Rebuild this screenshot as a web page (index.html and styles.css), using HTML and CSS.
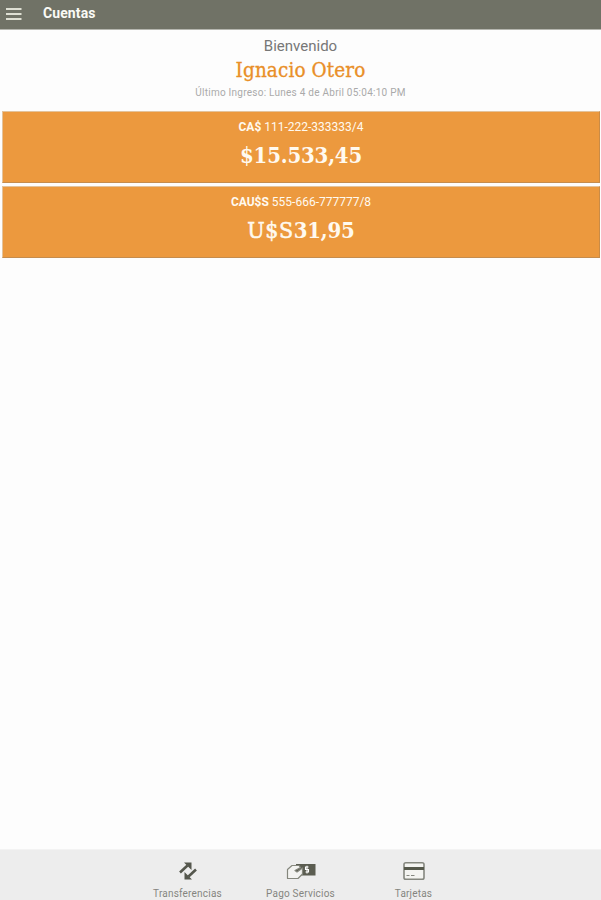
FILE: index.html
```html
<!DOCTYPE html>
<html lang="es">
<head>
<meta charset="utf-8">
<title>Cuentas</title>
<link rel="stylesheet" href="styles.css">
</head>
<body>
<header class="bar">
  <svg class="menu" width="16" height="14" viewBox="0 0 16 14"><path d="M0 2h15.500M0 7h15.500M0 12h15.500" stroke="#dedfd3" stroke-width="2.200"/></svg>
  <h1 class="title">Cuentas</h1>
</header>
<main class="content">
  <section class="welcome">
    <p class="hello">Bienvenido</p>
    <p class="name">Ignacio Otero</p>
    <p class="last">Último Ingreso: Lunes 4 de Abril 05:04:10 PM</p>
  </section>
  <section class="accounts">
    <article class="account">
      <p class="number"><b>CA$</b> 111-222-333333/4</p>
      <p class="amount">$15.533,45</p>
    </article>
    <article class="account">
      <p class="number"><b>CAU$S</b> 555-666-777777/8</p>
      <p class="amount"><span class="currency">U$S</span>31,95</p>
    </article>
  </section>
</main>
<nav class="tabs">
  <a class="tab">
    <svg class="icon" width="30" height="22" viewBox="0 0 30 22"><g fill="none" stroke="#55574d" stroke-width="2.600"><path d="M7 12.500 14.500 5.500M23 9.500l-7.500 7"/></g><path d="M11 2.500h7.500V10zM11.500 12v7.500H19z" fill="#55574d"/></svg>
    <span class="label">Transferencias</span>
  </a>
  <a class="tab">
    <svg class="icon" width="30" height="22" viewBox="0 0 30 22"><path d="M10 4h19.500v11.500H13l-3-3z" fill="#5b5d51"/><path d="M1.500 9.500 6 5.500h7l1.500 2L9 10.500l2 1.500 5.500-4v6L12 18.500H1.500z" fill="#f3f3f1" stroke="#85877d" stroke-width="1.200" stroke-linejoin="round"/><path d="M22.500 7h-3v2.500h3V12h-3M21 5.700v7.800" fill="none" stroke="#fff" stroke-width="1.100"/></svg>
    <span class="label">Pago Servicios</span>
  </a>
  <a class="tab">
    <svg class="icon" width="30" height="22" viewBox="0 0 30 22"><rect x="5" y="2.700" width="20" height="16.500" rx="1.800" fill="#f4f4f1" stroke="#85877f" stroke-width="1.600"/><path d="M5 8.500h20" stroke="#55584b" stroke-width="3"/><path d="M7.500 15.500h3M12 15.500h3.500" stroke="#85877f" stroke-width="1.200"/></svg>
    <span class="label">Tarjetas</span>
  </a>
</nav>
</body>
</html>
```
FILE: styles.css
```css
* { box-sizing: border-box; }
body { margin: 0; height: 900px; display: flex; flex-direction: column; background: #fdfdfd; font-family: Roboto, sans-serif; overflow: hidden; }
p, h1 { margin: 0; white-space: nowrap; }
.bar { height: 30px; display: flex; align-items: center; padding: 0 6px 3px; background: #707266; border-bottom: 1px solid #b5b6af; }
.menu { margin-top: 1px; }
.title { margin-left: 21px; font-size: 14px; line-height: 20px; font-weight: 700; letter-spacing: 0.1px; color: #fafaf5; }
.content { flex: 1; }
.welcome { height: 81px; padding-top: 6px; text-align: center; }
.hello { font-size: 15px; line-height: 20px; color: #777; }
.name { font-family: "DejaVu Serif Condensed", "DejaVu Serif", serif; font-stretch: condensed; font-size: 20.5px; line-height: 29px; letter-spacing: 0.1px; color: #e98f28; -webkit-text-stroke: 0.3px #e98f28; }
.last { font-size: 10px; line-height: 16px; letter-spacing: 0.25px; color: #aaa; }
.accounts { display: flex; flex-direction: column; gap: 3px; padding: 0 1px 0 2px; }
.account { height: 72px; padding-top: 7px; text-align: center; background: #ec993e; color: #fffaf0; border: 1px solid #e3c39c; border-right-color: #c98b46; border-bottom-color: #c58c4d; }
.number { font-size: 12px; line-height: 17px; }
.amount { font-family: "DejaVu Serif Condensed", "DejaVu Serif", serif; font-stretch: condensed; font-weight: 700; font-size: 22px; line-height: 39px; letter-spacing: -0.2px; }
.currency { font-weight: 400; font-size: 23px; letter-spacing: 0.5px; -webkit-text-stroke: 0.5px #fffaf0; }
.tabs { height: 51px; display: flex; justify-content: center; background: #ededed; border-top: 1px solid #f3f3f3; }
.tab { width: 113px; display: flex; flex-direction: column; align-items: center; padding-top: 10px; }
.icon { flex: none; }
.label { margin-top: 4px; font-size: 10px; line-height: 16px; letter-spacing: 0.2px; color: #85857f; white-space: nowrap; }
```
